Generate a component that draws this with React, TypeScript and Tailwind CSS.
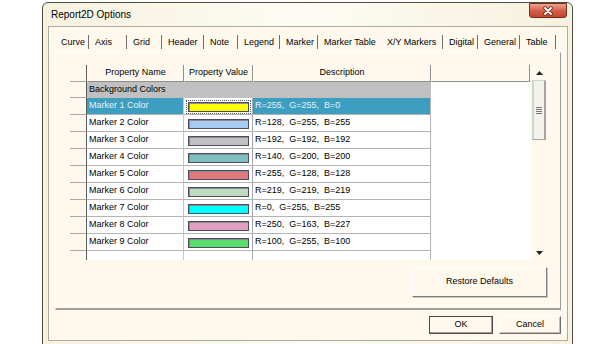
import React from 'react';

const FONT = "font-['Liberation_Sans',Arial,sans-serif]";

const tabs: [string, number][] = [
  ['Curve', 34],
  ['Axis', 38],
  ['Grid', 35],
  ['Header', 42],
  ['Note', 34],
  ['Legend', 42],
  ['Marker', 38],
  ['Marker Table', 63],
  ['X/Y Markers', 62],
  ['Digital', 35],
  ['General', 42],
  ['Table', 36],
];

const SELECTED_TAB = 'X/Y Markers';

const markers = [
  { name: 'Marker 1 Color', color: '#ffff00', desc: 'R=255,  G=255,  B=0' },
  { name: 'Marker 2 Color', color: '#a6caf0', desc: 'R=128,  G=255,  B=255' },
  { name: 'Marker 3 Color', color: '#c0c0c0', desc: 'R=192,  G=192,  B=192' },
  { name: 'Marker 4 Color', color: '#7fbfbf', desc: 'R=140,  G=200,  B=200' },
  { name: 'Marker 5 Color', color: '#e07a7a', desc: 'R=255,  G=128,  B=128' },
  { name: 'Marker 6 Color', color: '#c0dcc0', desc: 'R=219,  G=219,  B=219' },
  { name: 'Marker 7 Color', color: '#00ffff', desc: 'R=0,  G=255,  B=255' },
  { name: 'Marker 8 Color', color: '#e0a0c0', desc: 'R=250,  G=163,  B=227' },
  { name: 'Marker 9 Color', color: '#5ddc6e', desc: 'R=100,  G=255,  B=100' },
];

function RowHeaderCell({ h }: { h: string }) {
  return <div className={`w-[17px] ${h} shrink-0 bg-[#fff9ed] border-b border-b-[#a8a8a8] border-r border-r-[#5a5a5a]`} />;
}

export default function App() {
  return (
    <div className={`w-[600px] h-[344px] overflow-hidden bg-white pl-[42px] pt-[2px] ${FONT}`}>
      {/* Dialog frame */}
      <div className="w-[531px] h-[360px] border border-[#4e4e40] rounded-t-[6px] bg-gradient-to-r from-[#f7f2e0] via-[#fdfbf4] to-[#f6f1de] flex flex-col">
        {/* Title bar */}
        <div className="h-[23px] flex items-start justify-between">
          <span className="self-center pl-[8px] text-[10px] text-black">Report2D Options</span>
          <div className="mr-[5px] w-[38px] h-[15px] rounded-b-[3px] border border-[#7c2c1c] bg-gradient-to-b from-[#eba494] via-[#d4604a] to-[#c2452f] flex items-center justify-center">
            <svg width="12" height="10" viewBox="0 0 12 10">
              <path d="M3 2 L9 8 M9 2 L3 8" stroke="#5a2a20" strokeWidth="3.4" strokeLinecap="round" />
              <path d="M3 2 L9 8 M9 2 L3 8" stroke="#ffffff" strokeWidth="1.8" strokeLinecap="round" />
            </svg>
          </div>
        </div>

        {/* Client area */}
        <div className="ml-[5px] w-[520px] border border-[#a8ad9c] bg-[#fff9ed] pt-[5px] pb-[6px] flex flex-col">
          {/* Tab strip */}
          <div className="h-[20px] pl-[6px] flex items-center text-[9px] text-black">
            {tabs.map(([label, w]) => {
              const selected = label === SELECTED_TAB;
              const noSep = label === 'Marker Table';
              return (
                <div
                  key={label}
                  style={{ width: w }}
                  className={`h-[14px] flex items-center pl-[6px] pt-[2px] whitespace-nowrap ${
                    noSep ? '' : 'border-r border-r-[#6e6e6e]'
                  } ${selected ? 'pb-[1px]' : ''}`}
                >
                  {label}
                </div>
              );
            })}
          </div>

          {/* Tab panel */}
          <div className="ml-[6px] w-[506px] h-[258px] border-l border-t border-l-[#fffefa] border-t-[#fffefa] border-r border-r-[#9a9a9a] border-b-2 border-b-[#a0a0a0] pl-[14px] pt-[12px] pr-[13px] flex flex-col">
            {/* Grid */}
            <div className="w-[477px] h-[195px] flex text-[9px] text-black overflow-hidden">
              <div className="w-[461px] flex flex-col">
                {/* Header */}
                <div className="h-[17px] flex shrink-0">
                  <RowHeaderCell h="h-[17px]" />
                  <div className="w-[97px] h-[17px] flex items-center justify-center border-b border-b-[#8e8e8e] border-r border-r-[#8e8e8e] border-l border-l-white">
                    Property Name
                  </div>
                  <div className="w-[69px] h-[17px] flex items-center justify-center border-b border-b-[#8e8e8e] border-r border-r-[#8e8e8e] border-l border-l-white">
                    Property Value
                  </div>
                  <div className="w-[178px] h-[17px] flex items-center justify-center border-b border-b-[#8e8e8e] border-r border-r-[#8e8e8e] border-l border-l-white">
                    Description
                  </div>
                  <div className="w-[99px] h-[17px] border-b border-b-[#8e8e8e] border-r border-r-[#8e8e8e] border-l border-l-white" />
                </div>

                {/* Category row */}
                <div className="h-[16px] flex shrink-0">
                  <RowHeaderCell h="h-[16px]" />
                  <div className="w-[344px] h-[16px] bg-[#c0c0c0] flex items-center pl-[2px]">Background Colors</div>
                  <div className="w-[100px] h-[16px] bg-white" />
                </div>

                {/* Marker rows */}
                {markers.map((m, i) => {
                  const selected = i === 0;
                  return (
                    <div key={m.name} className="h-[17px] flex shrink-0">
                      <RowHeaderCell h="h-[17px]" />
                      <div
                        className={`w-[97px] h-[17px] flex items-center pl-[2px] border-b border-b-[#b4b4b4] border-r border-r-[#b8d4b8] ${
                          selected ? 'bg-[#3d9ec0] text-[#e4f2fc]' : 'bg-white'
                        }`}
                      >
                        {m.name}
                      </div>
                      <div className="w-[69px] h-[17px] bg-white border-b border-b-[#b4b4b4] border-r border-r-[#a8a8a8] pl-[2px] pt-[2px]">
                        <div className={`w-[65px] h-[14px] p-[1px] ${selected ? 'border border-dotted border-[#555]' : 'border border-transparent'}`}>
                          <div
                            className="w-[61px] h-[10px] border border-[#4c4c5c] shadow-[inset_1px_1px_0_#8a8a96]"
                            style={{ backgroundColor: m.color }}
                          />
                        </div>
                      </div>
                      <div
                        className={`w-[178px] h-[17px] flex items-center pl-[2px] whitespace-pre border-b border-b-[#b4b4b4] border-r border-r-[#b4b4b4] ${
                          selected ? 'bg-[#3d9ec0] text-[#e4f2fc]' : 'bg-white'
                        }`}
                      >
                        {m.desc}
                      </div>
                      <div className="w-[100px] h-[17px] bg-white" />
                    </div>
                  );
                })}

                {/* Empty trailing row */}
                <div className="h-[9px] flex shrink-0">
                  <div className="w-[17px] h-[9px] bg-[#fff9ed] border-r border-r-[#5a5a5a]" />
                  <div className="w-[97px] h-[9px] bg-white border-r border-r-[#b8d4b8]" />
                  <div className="w-[69px] h-[9px] bg-white border-r border-r-[#a8a8a8]" />
                  <div className="w-[178px] h-[9px] bg-white border-r border-r-[#b4b4b4]" />
                  <div className="w-[100px] h-[9px] bg-white" />
                </div>
              </div>

              {/* Vertical scrollbar */}
              <div className="w-[16px] h-[195px] bg-[#fff9ed] flex flex-col items-center">
                <div className="h-[15px] flex items-center justify-center">
                  <svg width="7" height="4" viewBox="0 0 7 4">
                    <path d="M0 4 L3.5 0 L7 4 Z" fill="#222" />
                  </svg>
                </div>
                <div className="w-[14px] h-[60px] border-l-2 border-t border-l-[#c4dcc4] border-t-[#c4dcc4] border-r-2 border-r-[#a4a4a4] border-b border-b-[#a4a4a4] bg-[#f4f2ec] flex items-center justify-center">
                  <div className="flex flex-col gap-[1px]">
                    <div className="w-[6px] h-[1px] bg-[#7a7a7a]" />
                    <div className="w-[6px] h-[1px] bg-[#7a7a7a]" />
                    <div className="w-[6px] h-[1px] bg-[#7a7a7a]" />
                    <div className="w-[6px] h-[1px] bg-[#7a7a7a]" />
                  </div>
                </div>
                <div className="flex-1" />
                <div className="h-[15px] flex items-center justify-center">
                  <svg width="7" height="4" viewBox="0 0 7 4">
                    <path d="M0 0 L3.5 4 L7 0 Z" fill="#222" />
                  </svg>
                </div>
              </div>
            </div>

            {/* Restore Defaults */}
            <div className="mt-[7px] flex justify-end">
              <button className="w-[135px] h-[30px] bg-[#fff9ed] border border-t-white border-l-white border-r-[#7c7c7c] border-b-[#7c7c7c] shadow-[1px_1px_0_#c8c8c8] text-[9px] text-black">
                Restore Defaults
              </button>
            </div>
          </div>

          {/* Dialog buttons */}
          <div className="mt-[6px] pr-[6px] flex justify-end gap-[6px]">
            <button className="w-[64px] h-[18px] bg-[#fff9ed] border border-[#4a4a4a] shadow-[inset_-1px_-1px_0_#a0a0a0] text-[9px] text-black">
              OK
            </button>
            <button className="w-[62px] h-[18px] bg-[#fff9ed] border border-t-white border-l-white border-r-[#6e6e6e] border-b-[#6e6e6e] shadow-[inset_-1px_-1px_0_#c0c0c0] text-[9px] text-black">
              Cancel
            </button>
          </div>
        </div>
      </div>
    </div>
  );
}
